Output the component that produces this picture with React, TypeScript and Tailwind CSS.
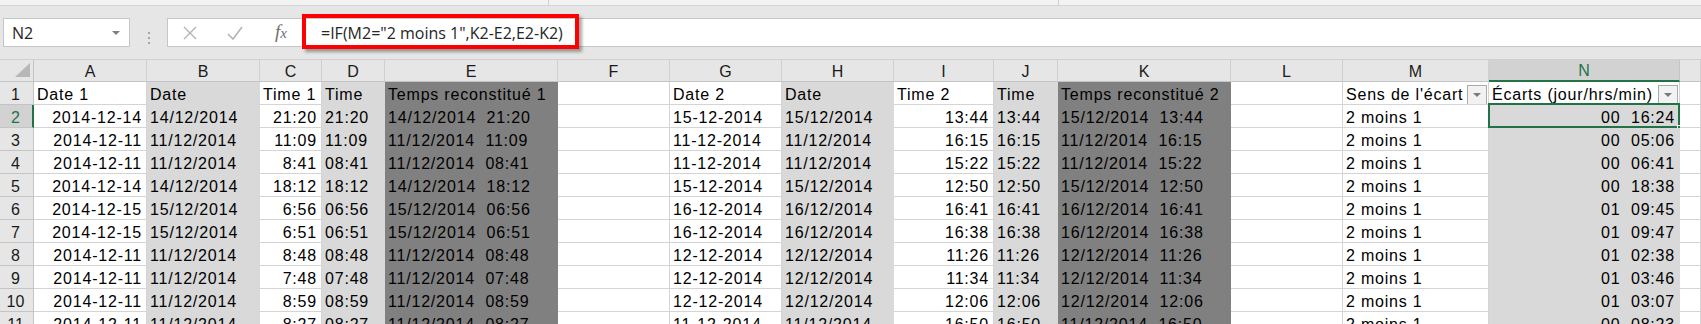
import React from "react";

type Fill = "w" | "l" | "d";
type Align = "l" | "r";

const COLS: { name: string; fill: Fill; align: Align }[] = [
  { name: "A", fill: "w", align: "r" },
  { name: "B", fill: "l", align: "l" },
  { name: "C", fill: "w", align: "r" },
  { name: "D", fill: "l", align: "l" },
  { name: "E", fill: "d", align: "l" },
  { name: "F", fill: "w", align: "l" },
  { name: "G", fill: "w", align: "l" },
  { name: "H", fill: "l", align: "l" },
  { name: "I", fill: "w", align: "r" },
  { name: "J", fill: "l", align: "l" },
  { name: "K", fill: "d", align: "l" },
  { name: "L", fill: "w", align: "l" },
  { name: "M", fill: "w", align: "l" },
  { name: "N", fill: "l", align: "r" },
  { name: "", fill: "w", align: "l" },
];

// row 1 fills differ a bit (N1 is white)
const ROW1_FILL: Fill[] = ["w", "l", "w", "l", "d", "w", "w", "l", "w", "l", "d", "w", "w", "w", "w"];
const ROW1 = ["Date 1", "Date", "Time 1", "Time", "Temps reconstitué 1", "", "Date 2", "Date", "Time 2", "Time", "Temps reconstitué 2", "", "Sens de l'écart", "Écarts (jour/hrs/min)", ""];

const dates1 = ["2014-12-14", "2014-12-11", "2014-12-11", "2014-12-14", "2014-12-15", "2014-12-15", "2014-12-11", "2014-12-11", "2014-12-11", "2014-12-11"];
const times1 = ["21:20", "11:09", "8:41", "18:12", "6:56", "6:51", "8:48", "7:48", "8:59", "8:27"];
const dates2 = ["15-12-2014", "11-12-2014", "11-12-2014", "15-12-2014", "16-12-2014", "16-12-2014", "12-12-2014", "12-12-2014", "12-12-2014", "11-12-2014"];
const times2 = ["13:44", "16:15", "15:22", "12:50", "16:41", "16:38", "11:26", "11:34", "12:06", "16:50"];
const ecarts = ["00  16:24", "00  05:06", "00  06:41", "00  18:38", "01  09:45", "01  09:47", "01  02:38", "01  03:46", "01  03:07", "00  08:23"];

const pad = (t: string) => (t.length === 4 ? "0" + t : t);

const rows = dates1.map((d1, i) => {
  const [y, m, d] = d1.split("-");
  const b = `${d}/${m}/${y}`;
  const dd = pad(times1[i]);
  const h = dates2[i].split("-").join("/");
  const j = pad(times2[i]);
  return [d1, b, times1[i], dd, `${b}  ${dd}`, "", dates2[i], h, times2[i], j, `${h}  ${j}`, "", "2 moins 1", ecarts[i], ""];
});

const fillCls = (f: Fill) =>
  f === "w"
    ? "bg-white border-[#d4d4d4]"
    : f === "l"
    ? "bg-[#d9d9d9] border-[#d9d9d9]"
    : "bg-[#808080] border-[#808080]";

function FilterButton() {
  return (
    <div className="ml-auto mr-[1px] flex h-[20px] w-[20px] shrink-0 items-center justify-center border border-[#ababab] bg-[#f2f2f2]">
      <div className="h-0 w-0 border-x-[4px] border-t-[4px] border-x-transparent border-t-[#7a7a7a]" />
    </div>
  );
}

export default function App() {
  return (
    <div className="relative h-[324px] w-[1701px] overflow-hidden bg-[#e6e6e6] font-['Liberation_Sans',Arial,sans-serif] text-black">
      {/* ribbon edge */}
      <div className="flex h-[6px] border-b border-[#d5d5d5] bg-[#f3f3f3]">
        <div className="w-[548px]" />
        <div className="w-px bg-[#cfcfcf]" />
        <div className="w-[509px]" />
        <div className="w-px bg-[#cfcfcf]" />
      </div>

      {/* formula bar */}
      <div className="flex h-[54px] border-b border-[#d0d0d0] pt-[12px]">
        <div className="ml-[3px] flex h-[29px] w-[127px] items-center justify-between border border-[#c6c6c6] bg-white pl-[8px] pr-[9px]">
          <span className="font-['Open_Sans',sans-serif] text-[16px] text-[#262626]">N2</span>
          <div className="h-0 w-0 border-x-[4px] border-t-[4px] border-x-transparent border-t-[#7f7f7f]" />
        </div>
        <div className="flex w-[37px] flex-col items-center justify-center gap-[3px] pb-[2px]">
          <div className="h-[2px] w-[2px] bg-[#a6a6a6]" />
          <div className="h-[2px] w-[2px] bg-[#a6a6a6]" />
          <div className="h-[2px] w-[2px] bg-[#a6a6a6]" />
        </div>
        <div className="flex h-[29px] flex-1 items-center border border-r-0 border-[#c6c6c6] bg-white">
          <div className="flex w-[44px] justify-center">
            <svg width="16" height="16" viewBox="0 0 16 16" fill="none" stroke="#b3b3b3" strokeWidth="1.4">
              <path d="M2 2 L14 14 M14 2 L2 14" />
            </svg>
          </div>
          <div className="flex w-[46px] justify-center">
            <svg width="18" height="16" viewBox="0 0 18 16" fill="none" stroke="#b3b3b3" strokeWidth="1.6">
              <path d="M2 9 L7 14 L16 2" />
            </svg>
          </div>
          <div className="flex w-[46px] justify-center">
            <span className="font-['Liberation_Serif',serif] text-[19px] italic text-[#6f6f6f]">
              f<span className="text-[15px]">x</span>
            </span>
          </div>
          <span className="whitespace-pre pl-[17px] font-['Open_Sans',sans-serif] text-[16px] text-[#262626]">
            =IF(M2="2 moins 1",K2-E2,E2-K2)
          </span>
        </div>
      </div>

      {/* sheet */}
      <div className="grid grid-cols-[34px_113px_113px_62px_63px_173px_112px_112px_112px_100px_64px_173px_112px_146px_191px_1fr] text-[16px] tracking-[0.8px]">
        {/* column headers */}
        <div className="relative h-[22px] border-r border-b border-[#c4c4c4] bg-[#e6e6e6]">
          <svg className="absolute bottom-[4px] right-[3px]" width="15" height="14" viewBox="0 0 15 14">
            <path d="M15 0 L15 14 L0 14 Z" fill="#b7b7b7" />
          </svg>
        </div>
        {COLS.map((c) =>
          c.name === "N" ? (
            <div
              key={c.name}
              className="flex h-[22px] items-center justify-center border-r border-b-2 border-r-[#c4c4c4] border-b-[#217346] bg-[#d2d2d2] pt-[1px] tracking-normal text-[#217346]"
            >
              N
            </div>
          ) : (
            <div
              key={c.name || "O"}
              className="flex h-[22px] items-center justify-center border-r border-b border-r-[#d0d0d0] border-b-[#c4c4c4] bg-[#e6e6e6] pt-[2px] tracking-normal text-[#1a1a1a]"
            >
              {c.name}
            </div>
          )
        )}

        {/* row 1 */}
        <div className="h-[23px] border-r border-b border-[#c4c4c4] bg-[#e6e6e6] pt-[3px] pr-[2px] text-center leading-[20px] tracking-normal text-[#1a1a1a]">
          1
        </div>
        {ROW1.map((t, i) => (
          <div
            key={"r1" + i}
            className={`flex h-[23px] items-start overflow-hidden whitespace-pre border-r border-b pl-[3px] pt-[3px] leading-[20px] ${fillCls(ROW1_FILL[i])}`}
          >
            <span>{t}</span>
            {(i === 12 || i === 13) && <FilterButton />}
          </div>
        ))}

        {/* data rows */}
        {rows.map((r, ri) => (
          <React.Fragment key={ri}>
            {ri === 0 ? (
              <div className="h-[23px] border-r-2 border-b border-r-[#217346] border-b-[#c4c4c4] bg-[#d2d2d2] pt-[3px] pr-[1px] text-center leading-[20px] tracking-normal text-[#217346]">
                2
              </div>
            ) : (
              <div className="h-[23px] border-r border-b border-[#c4c4c4] bg-[#e6e6e6] pt-[3px] pr-[2px] text-center leading-[20px] tracking-normal text-[#1a1a1a]">
                {ri + 2}
              </div>
            )}
            {r.map((t, ci) => {
              const col = COLS[ci];
              const active = ri === 0 && ci === 13;
              return (
                <div
                  key={ci}
                  className={`relative h-[23px] overflow-hidden whitespace-pre border-r border-b pt-[3px] leading-[20px] ${fillCls(col.fill)} ${
                    col.align === "r" ? "pr-[4px] text-right" : "pl-[3px] text-left"
                  } ${active ? "overflow-visible" : ""}`}
                >
                  {t}
                  {active && (
                    <>
                      <div className="absolute -left-px -top-[2px] -right-[1px] -bottom-[1px] border-2 border-[#217346]" />
                      <div className="absolute -bottom-[4px] -right-[4px] h-[6px] w-[6px] border border-white bg-[#217346]" />
                    </>
                  )}
                </div>
              );
            })}
          </React.Fragment>
        ))}
      </div>

      {/* red annotation around the formula */}
      <div className="pointer-events-none absolute left-[302px] top-[14px] h-[35px] w-[277px] border-[4px] border-[#ff0000] shadow-[3px_3px_3px_rgba(0,0,0,0.35)]" />
    </div>
  );
}
